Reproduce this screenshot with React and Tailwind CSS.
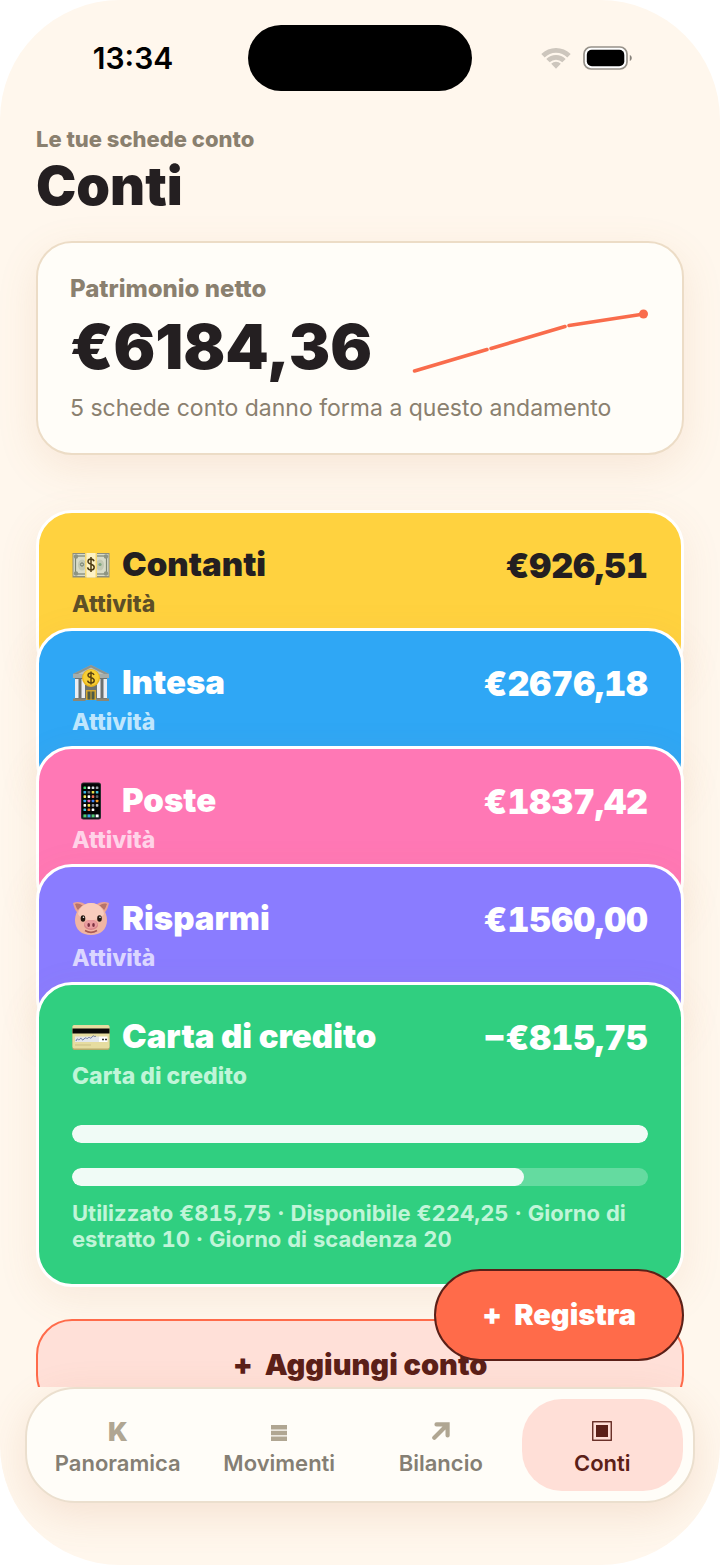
import React from "react";
import clsx from "clsx";

function CashIcon() {
  return (
    <svg viewBox="0 0 38 38" className="size-[38px] shrink-0" aria-hidden="true">
      <rect x="0.500" y="7" width="37" height="24.500" fill="#8d8f80" />
      <rect x="1.500" y="8" width="35" height="22" fill="#d9dcc8" />
      <rect x="3.500" y="10" width="31" height="18" fill="none" stroke="#7d8573" strokeWidth="1.200" />
      <g fill="#8d9483">
        <circle cx="4" cy="10.500" r="2.200" />
        <circle cx="34" cy="10.500" r="2.200" />
        <circle cx="4" cy="27.500" r="2.200" />
        <circle cx="34" cy="27.500" r="2.200" />
      </g>
      <ellipse cx="10" cy="19" rx="4" ry="5.500" fill="#c3c9b3" />
      <ellipse cx="28" cy="19" rx="4" ry="5.500" fill="#c3c9b3" />
      <circle cx="10" cy="18.500" r="1.600" fill="none" stroke="#6d7869" />
      <circle cx="28" cy="18.500" r="1.600" fill="#7fa77c" />
      <rect x="13" y="7" width="12" height="24.500" fill="#f6d873" />
      <rect x="14.500" y="7" width="9" height="24.500" fill="#fdf2c4" />
      <path d="M22 15.200c-.4-1.500-1.500-2.200-3-2.200-1.700 0-3 .9-3 2.500 0 3.600 6.200 2 6.200 5.700 0 1.800-1.500 2.800-3.200 2.800-1.800 0-3.100-.9-3.400-2.600M19 11v15" fill="none" stroke="#4c3a12" strokeWidth="1.500" />
    </svg>
  );
}

function BankIcon() {
  return (
    <svg viewBox="0 0 38 38" className="size-[38px] shrink-0" aria-hidden="true">
      <path d="M3 13h32v22H3z" fill="#6b7170" />
      <path d="M19 1 37 10v4H1v-4z" fill="#a5adab" />
      <path d="M19 1 37 10H1z" fill="#8a9492" />
      <path d="M19 3.500 32 10H6z" fill="#b9c0bd" />
      <g fill="#e9edf2">
        <rect x="3" y="15" width="3.500" height="19" />
        <rect x="9.500" y="15" width="3.500" height="19" />
        <rect x="25" y="15" width="3.500" height="19" />
        <rect x="31.500" y="15" width="3.500" height="19" />
      </g>
      <rect x="14" y="26" width="10" height="10" fill="#d0a52f" />
      <path d="M15.500 27.500h3v8h-3zM19.500 27.500h3v8h-3z" fill="#4e5b46" />
      <rect x="1" y="34.500" width="12.500" height="2.500" fill="#8d8773" />
      <rect x="24.500" y="34.500" width="12.500" height="2.500" fill="#8d8773" />
      <circle cx="19" cy="14" r="9" fill="#e9b51d" />
      <circle cx="19" cy="13.500" r="7.800" fill="#f8cf35" />
      <path d="M22 11c-.4-1.300-1.500-2-3-2-1.700 0-3 .9-3 2.300 0 3.200 6.200 1.800 6.200 5.100 0 1.600-1.500 2.500-3.200 2.500-1.800 0-3.100-.8-3.400-2.300M19 7.500v13" fill="none" stroke="#5c4410" strokeWidth="1.500" />
    </svg>
  );
}

function PhoneIcon() {
  const colors = ["#45d36b", "#ffffff", "#d7dbe0", "#9aa0a8", "#3bb7ee", "#6b7078", "#e8e04b", "#41c3d9", "#f5e85b", "#ffffff", "#ef6f5a", "#5a5f66", "#39a9f0", "#f06cc0", "#3b82f6", "#f59e2a", "#ffffff", "#f7e14c", "#8c929b", "#b6bac0", "#39c5e8", "#f0762e", "#ffffff", "#000000"];
  return (
    <svg viewBox="0 0 38 38" className="size-[38px] shrink-0" aria-hidden="true">
      <rect x="9" y="0.500" width="20" height="37" rx="2.500" fill="#2b2b2e" />
      <rect x="10" y="1.500" width="18" height="35" rx="1.800" fill="#040405" />
      {colors.map((color, i) => (
        <rect key={i} x={11.5 + (i % 4) * 4.1} y={4.5 + Math.floor(i / 4) * 4.4} width="2.600" height="2.600" rx="0.600" fill={color} />
      ))}
      <rect x="10.500" y="32" width="17" height="4" rx="1" fill="#263338" />
      {["#45d36b", "#35a8ef", "#4fd06f", "#ffffff"].map((color, i) => (
        <rect key={color} x={11.5 + i * 4.1} y="32.500" width="2.800" height="2.800" rx="0.600" fill={color} />
      ))}
    </svg>
  );
}

function PigIcon() {
  return (
    <svg viewBox="0 0 38 38" className="size-[38px] shrink-0" aria-hidden="true">
      <path d="M1 3c4-2 10-1 13 2l-8 8C3 11 2 7 1 3zM37 3c-4-2-10-1-13 2l8 8c3-2 4-6 5-10z" fill="#e9a294" />
      <path d="M3 4c3-1 6 0 8 2l-5 4C4 8 4 6 3 4zM35 4c-3-1-6 0-8 2l5 4c2-2 2-4 3-6z" fill="#b87468" />
      <path d="M19 3c9 0 16 8 16 17 0 10-7 15-16 15S3 30 3 20C3 11 10 3 19 3z" fill="#f0b5a3" />
      <path d="M19 3c7 0 12 5 13 11-3 5-7 6-13 6S9 19 6 14C7 8 12 3 19 3z" fill="#f9cdbd" />
      <ellipse cx="11" cy="18.500" rx="2.300" ry="3.300" fill="#231810" />
      <ellipse cx="27.500" cy="18.500" rx="2.300" ry="3.300" fill="#231810" />
      <circle cx="11.500" cy="17.300" r=".8" fill="#fff" />
      <circle cx="28" cy="17.300" r=".8" fill="#fff" />
      <path d="M13 30.500c4 2.500 8 2.500 12 0" fill="none" stroke="#a85b55" strokeWidth="1.500" />
      <ellipse cx="19" cy="25" rx="7" ry="5" fill="#d9828a" />
      <ellipse cx="19" cy="24.300" rx="6.200" ry="4.200" fill="#ea9da0" />
      <ellipse cx="16.700" cy="25" rx="1.300" ry="2" fill="#7b3040" />
      <ellipse cx="21.500" cy="25" rx="1.300" ry="2" fill="#7b3040" />
    </svg>
  );
}

function CardIcon() {
  return (
    <svg viewBox="0 0 38 38" className="size-[38px] shrink-0" aria-hidden="true">
      <rect x="0.500" y="7" width="37" height="25" rx="1.800" fill="#b5ab6c" />
      <rect x="0.500" y="7" width="37" height="23.500" rx="1.800" fill="#e6dca0" />
      <rect x="0.500" y="10.500" width="37" height="5" fill="#0a0a08" />
      <rect x="3" y="18.500" width="24" height="5.500" fill="#e4e7ec" />
      <rect x="27" y="18.500" width="8.500" height="5.500" fill="#fff" />
      <path d="M4 23c2-5 2 1 4-2s1 3 4 0 2 1 4-1 2 2 4-1 2 1 4-1" fill="none" stroke="#5b6b9a" strokeWidth=".9" />
      <path d="M30 21.500h2M33 21.500h2" stroke="#333" strokeWidth="1.500" />
      <path d="M3 27h16" stroke="#cbbf86" strokeWidth="1" />
    </svg>
  );
}

const accounts = [
  { name: "Contanti", kind: "Attività", amount: "€926,51", icon: CashIcon, tone: "bg-[#ffd23f] text-[#241f21]", muted: "text-[#5e4f27]" },
  { name: "Intesa", kind: "Attività", amount: "€2676,18", icon: BankIcon, tone: "bg-[#2fa7f5] text-white", muted: "text-[#bfe6fd]" },
  { name: "Poste", kind: "Attività", amount: "€1837,42", icon: PhoneIcon, tone: "bg-[#ff78b5] text-white", muted: "text-[#ffd3e8]" },
  { name: "Risparmi", kind: "Attività", amount: "€1560,00", icon: PigIcon, tone: "bg-[#8a7cff] text-white", muted: "text-[#dbd6ff]" },
  {
    name: "Carta di credito",
    kind: "Carta di credito",
    amount: "−€815,75",
    icon: CardIcon,
    tone: "bg-[#30cf80] text-white",
    muted: "text-[#c0f5d8]",
    bars: [100, 78.4],
    note: "Utilizzato €815,75 · Disponibile €224,25 · Giorno di estratto 10 · Giorno di scadenza 20",
  },
];

function AccountCard({ account, first }) {
  const Icon = account.icon;
  return (
    <li
      className={clsx(
        "rounded-[36px] border-[3px] border-white px-[33px] pt-8 pb-8 shadow-[0_12px_40px_rgba(190,120,70,0.1)]",
        account.tone,
        account.bars ? "" : "h-[170px]",
        !first && "-mt-[52px]"
      )}
    >
      <div className="flex h-10 items-center gap-3">
        <Icon />
        <h2 className="text-[33px] font-black">{account.name}</h2>
        <p className="ml-auto text-[34px] font-black tabular-nums">{account.amount}</p>
      </div>
      <p className={clsx("mt-1 text-[23px] leading-[30px] font-extrabold", account.muted)}>{account.kind}</p>
      {account.bars && (
        <div className="mt-[34px] flex flex-col gap-[25px]">
          {account.bars.map((value) => (
            <div key={value} className="h-[18px] overflow-hidden rounded-full bg-white/25">
              <div className="h-full rounded-full bg-[#f0fbf6]" style={{ width: `${value}%` }} />
            </div>
          ))}
        </div>
      )}
      {account.note && (
        <p className={clsx("mt-[14px] text-[22px] leading-[26px] font-bold tabular-nums", account.muted)}>{account.note}</p>
      )}
    </li>
  );
}

function StatusBar() {
  return (
    <header className="grid grid-cols-[1fr_224px_1fr] items-center pt-[25px]">
      <p className="pl-[18px] text-center text-[30px] font-semibold text-black">13:34</p>
      <div className="h-[66px] rounded-full bg-black" />
      <div className="flex items-center justify-center gap-3 pr-[18px]">
        <svg viewBox="0 0 30 22" className="h-[22px] w-[30px]" aria-hidden="true">
          <path d="M0.300 6.900a21 21 0 0 1 29.400 0l-3.400 3.500a16 16 0 0 0-22.600 0zM5.300 12a13.800 13.800 0 0 1 19.400 0l-3.400 3.300a9 9 0 0 0-12.600 0zM10.200 16.800a6.800 6.800 0 0 1 9.600 0L15 21.800z" fill="#cdc6bd" />
        </svg>
        <svg viewBox="0 0 50 24" className="h-6 w-[50px]" aria-hidden="true">
          <rect x="1" y="1" width="43" height="22" rx="7" fill="#fff" stroke="#969189" strokeWidth="1.700" />
          <rect x="3.800" y="3.800" width="37.500" height="16.400" rx="5" fill="#000" />
          <path d="M46.800 9v6c2.600-1 2.600-5 0-6z" fill="#87827b" />
        </svg>
      </div>
    </header>
  );
}

function NetWorth() {
  return (
    <section className="mt-6 rounded-[36px] border-2 border-[#ecdcc6] bg-[#fffdf8] px-8 pt-[30px] pb-[29px] shadow-[0_12px_40px_rgba(190,120,70,0.13)]">
      <div className="flex items-center justify-between">
        <div>
          <h2 className="text-[24px] leading-8 font-extrabold text-[#8a806f]">Patrimonio netto</h2>
          <p className="mt-2 text-[62px] leading-[68px] font-black text-[#241f21]">€6184,36</p>
        </div>
        <svg viewBox="0 0 238 68" className="mt-[30px] h-[68px] w-[238px] shrink-0" aria-hidden="true">
          <path d="M2.500 63 75 41.500M79 40.500l74-22M157 17.500l75-11.500" fill="none" stroke="#f96c4c" strokeWidth="3.500" strokeLinecap="round" />
          <circle cx="231.500" cy="6" r="4.500" fill="#f96c4c" />
        </svg>
      </div>
      <p className="mt-[11px] text-[23px] leading-8 text-[#8a806f]">5 schede conto danno forma a questo andamento</p>
    </section>
  );
}

const tabs = [
  { label: "Panoramica", icon: <span className="text-[26px] font-black">K</span> },
  {
    label: "Movimenti",
    icon: (
      <svg viewBox="0 0 16 16" className="mt-1 size-4" aria-hidden="true">
        <path d="M0 0h16v4.400H0zM0 5.800h16v4.400H0zM0 11.600h16V16H0z" fill="currentColor" />
      </svg>
    ),
  },
  {
    label: "Bilancio",
    icon: (
      <svg viewBox="0 0 18 18" className="size-[18px]" aria-hidden="true">
        <path d="M2.300 15.700 14 4M4.500 2.400h11.100v11.100" fill="none" stroke="currentColor" strokeWidth="4.200" strokeLinecap="round" strokeLinejoin="miter" />
      </svg>
    ),
  },
  {
    label: "Conti",
    active: true,
    icon: (
      <svg viewBox="0 0 20 20" className="size-5" aria-hidden="true">
        <rect x="0.750" y="0.750" width="18.500" height="18.500" fill="none" stroke="currentColor" strokeWidth="1.300" />
        <rect x="4" y="4" width="12" height="12" fill="currentColor" />
      </svg>
    ),
  },
];

function TabBar() {
  return (
    <nav className="relative mx-[25px] mb-[62px] grid grid-cols-4 rounded-[50px] border-2 border-[#ebdfce] bg-[#fffdf8] p-[10px] shadow-[0_12px_40px_rgba(190,120,70,0.16)]">
      {tabs.map((tab) => (
        <button
          key={tab.label}
          type="button"
          aria-current={tab.active ? "page" : undefined}
          className={clsx(
            "flex h-[92px] flex-col items-center rounded-[40px] pt-[19px] text-[22px] font-semibold",
            tab.active ? "bg-[#ffdfd7] text-[#5b2018]" : "text-[#857f74]"
          )}
        >
          <span className={clsx("flex h-[26px] items-center", !tab.active && "text-[#b0a692]")}>{tab.icon}</span>
          <span className="mt-1 leading-[30px]">{tab.label}</span>
        </button>
      ))}
    </nav>
  );
}

function App() {
  return (
    <div className="flex h-screen flex-col overflow-hidden rounded-[120px] bg-[#fff7ed] font-['Inter',sans-serif]">
      <StatusBar />
      <div className="relative flex min-h-0 flex-1 flex-col">
        <main className="min-h-0 flex-1 overflow-y-auto px-9 pt-8 pb-8 [scrollbar-width:none]">
          <p className="text-[22px] leading-8 font-extrabold text-[#8a806f]">Le tue schede conto</p>
          <h1 className="text-[54px] leading-[62px] font-black text-[#241f21]">Conti</h1>
          <NetWorth />
          <ul className="mt-[55px]">
            {accounts.map((account, i) => (
              <AccountCard key={account.name} account={account} first={i === 0} />
            ))}
          </ul>
          <button
            type="button"
            className="mt-8 flex h-[92px] w-full items-center justify-center gap-3 rounded-[36px] border-2 border-[#ff6b4a] bg-[#ffe0d8] text-[29px] font-black text-[#5b2018]"
          >
            <span>+</span>
            Aggiungi conto
          </button>
        </main>
        <button
          type="button"
          className="absolute right-9 bottom-[26px] z-10 flex h-[92px] items-center gap-3 rounded-full border-2 border-[#5b2018] bg-[#ff6b4a] px-[46px] text-[29px] font-black text-white"
        >
          <span>+</span>
          Registra
        </button>
      </div>
      <TabBar />
    </div>
  );
}

export default App;
